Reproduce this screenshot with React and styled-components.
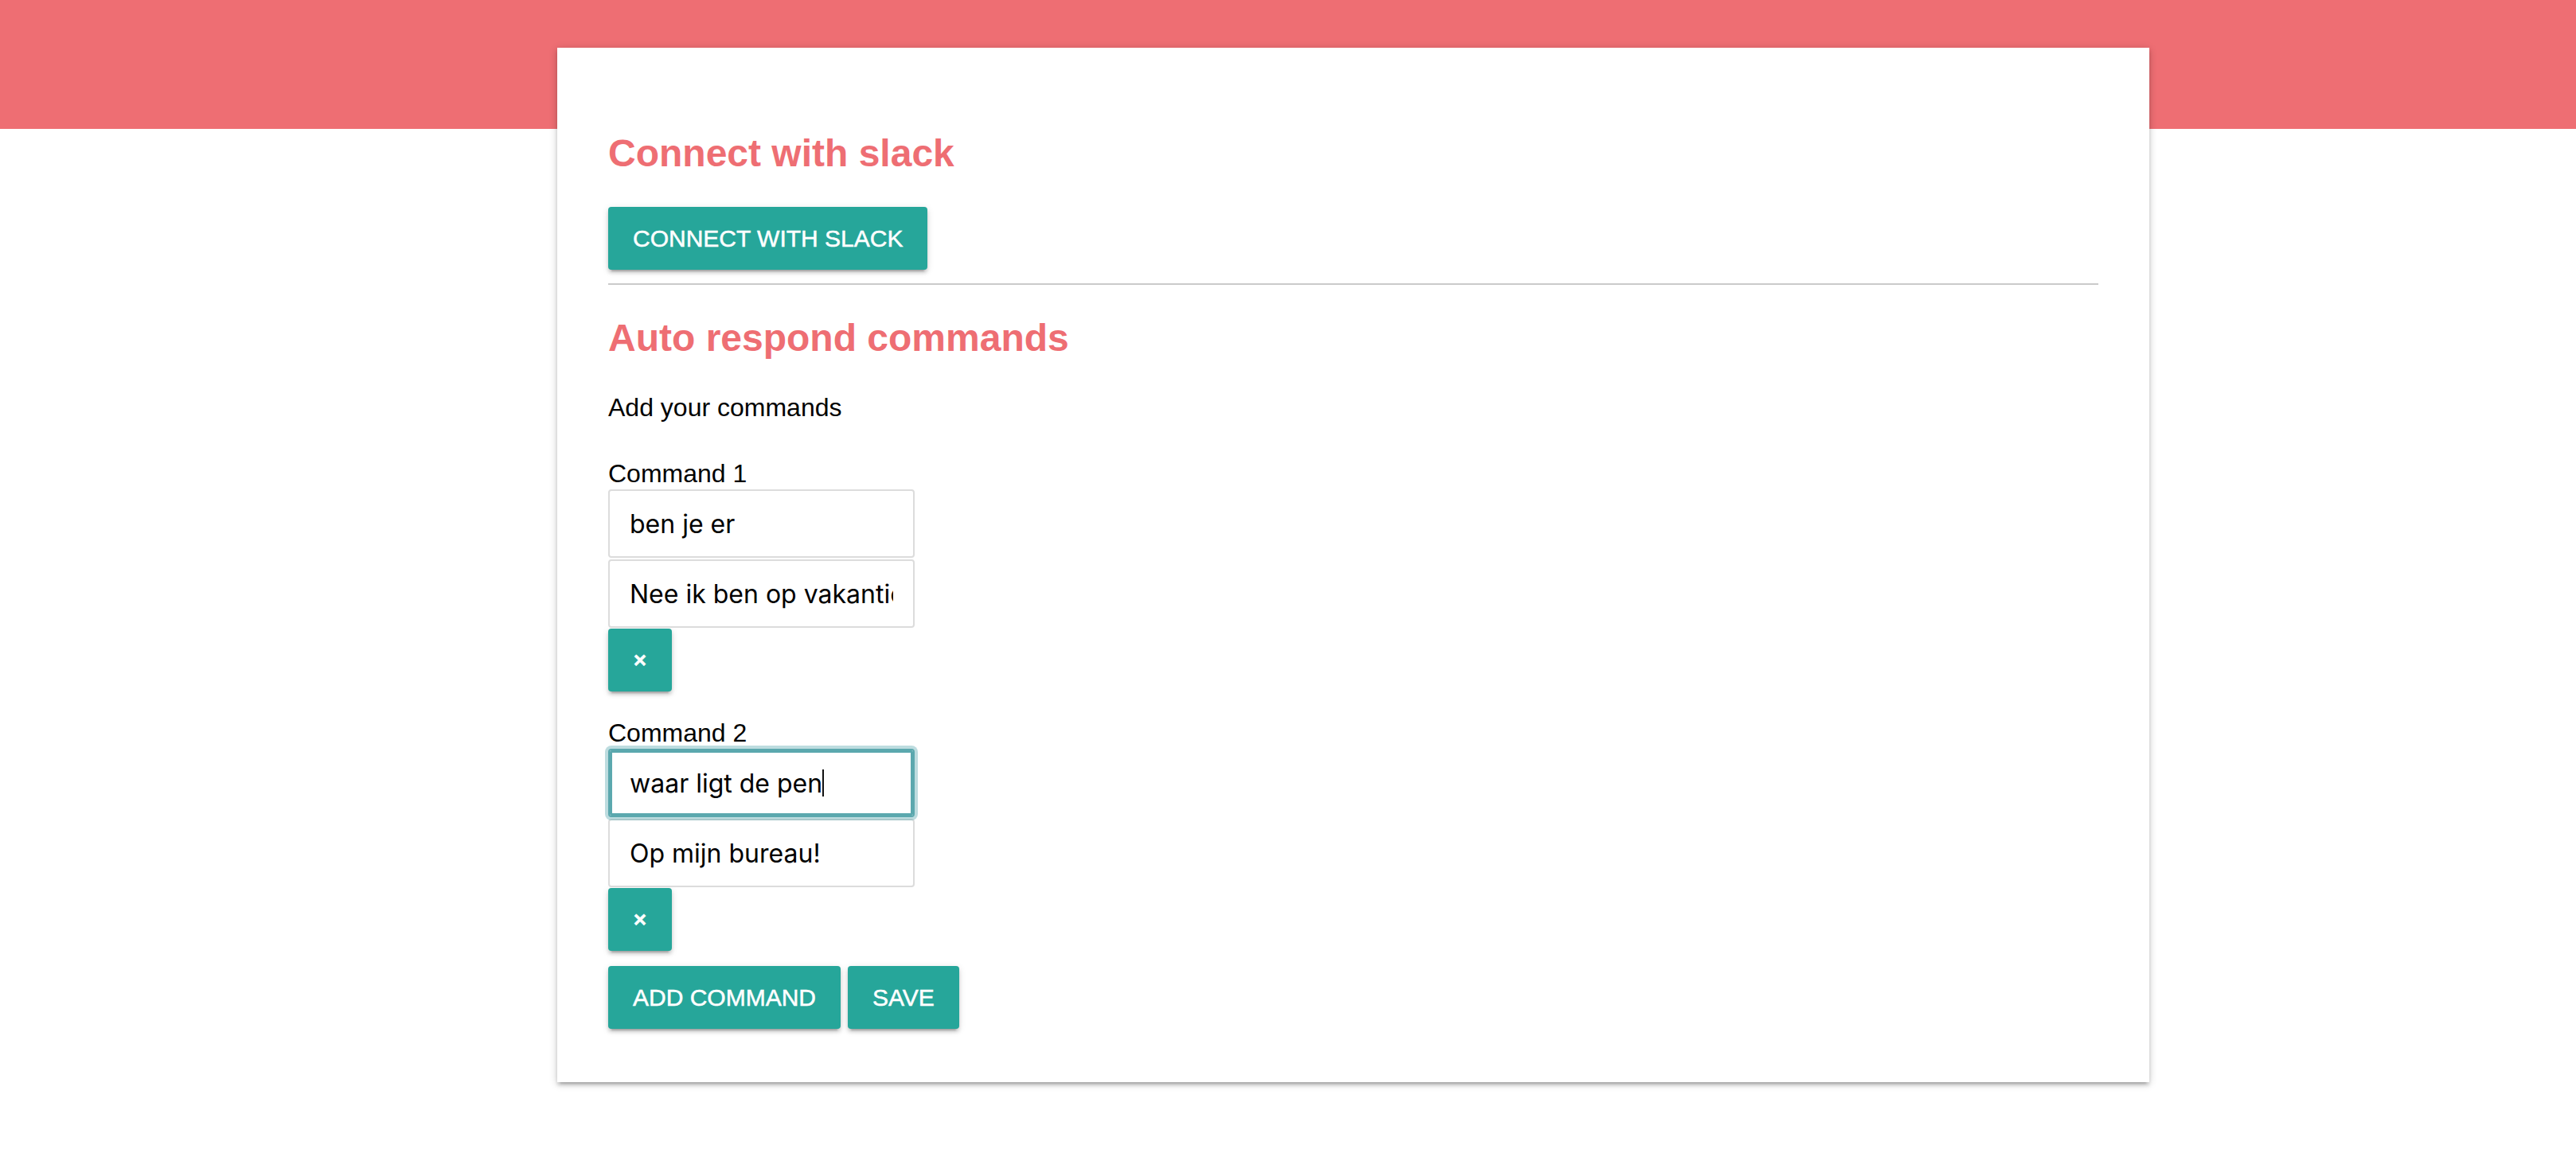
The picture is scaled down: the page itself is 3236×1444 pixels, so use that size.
import styled, { createGlobalStyle, css } from "styled-components";
import { useState } from "react";

const GlobalStyle = createGlobalStyle`
  body {
    margin: 0;
    background: #fff;
    color: #000;
    font-family: "Liberation Sans", Arial, Helvetica, sans-serif;
  }
`;

const Page = styled.div`
  min-height: 1444px;
  background: #fff;
`;

const Band = styled.header`
  height: 162px;
  background: #ee6e73;
`;

const Card = styled.main`
  box-sizing: border-box;
  width: 2000px;
  margin: -102px 0 0 700px;
  padding: 66px 64px 67px;
  background: #fff;
  display: flex;
  flex-direction: column;
  align-items: flex-start;
  box-shadow: 0 4px 4px 0 rgba(0, 0, 0, 0.14), 0 6px 2px -4px rgba(0, 0, 0, 0.12),
    0 2px 10px 0 rgba(0, 0, 0, 0.2);
`;

const Title = styled.h2`
  margin: 39px 0;
  font-size: 48px;
  line-height: 56px;
  font-weight: 700;
  color: #ee6e73;
`;

const Button = styled.button`
  box-sizing: border-box;
  height: 79px;
  min-width: ${(p) => (p.$square ? "80px" : "0")};
  padding: 0 31px;
  border: 0;
  border-radius: 4px;
  background: #26a69a;
  color: #fff;
  font-family: "Liberation Sans", Arial, sans-serif;
  font-size: ${(p) => (p.$square ? "28px" : "30px")};
  font-weight: ${(p) => (p.$square ? 700 : 400)};
  line-height: 79px;
  text-transform: uppercase;
  -webkit-text-stroke: 0.5px #fff;
  cursor: pointer;
  box-shadow: 0 4px 4px 0 rgba(0, 0, 0, 0.14), 0 2px 10px 0 rgba(0, 0, 0, 0.12),
    0 6px 2px -4px rgba(0, 0, 0, 0.2);
`;

const Divider = styled.hr`
  align-self: stretch;
  margin: 17px 0 0;
  border: 0;
  border-top: 2px solid #cacaca;
`;

const Intro = styled.p`
  margin: 0;
  font-size: 32px;
  line-height: 40px;
`;

const Group = styled.div`
  display: flex;
  flex-direction: column;
  align-items: flex-start;
  margin-top: ${(p) => (p.$first ? "43px" : "32px")};
`;

const Label = styled.label`
  font-size: 32px;
  line-height: 40px;
`;

const Fields = styled.div`
  display: flex;
  flex-direction: column;
  gap: 2px;
  margin-bottom: 1px;
`;

const FieldWrap = styled.div`
  position: relative;
  z-index: ${(p) => (p.$focused ? 1 : 0)};
`;

const TextInput = styled.input`
  display: block;
  box-sizing: border-box;
  width: 385px;
  height: 86px;
  margin: 0;
  padding: 0 25px;
  border: 2px solid #dcdcdc;
  border-radius: 4px;
  background: #fff;
  color: #000;
  font-family: Inter, "Noto Sans", sans-serif;
  font-size: 32px;
  outline: none;

  ${(p) =>
    p.$focused &&
    css`
      border-color: #5ba8ae;
      box-shadow: inset 0 0 0 3px #5ba8ae, 0 0 0 4px rgba(91, 168, 174, 0.4);
    `}
`;

const CaretLayer = styled.div`
  position: absolute;
  inset: 0;
  display: flex;
  align-items: center;
  padding: 0 27px;
  pointer-events: none;
  font-family: Inter, "Noto Sans", sans-serif;
  font-size: 32px;
  white-space: pre;
`;

const Ghost = styled.span`
  visibility: hidden;
`;

const Caret = styled.span`
  width: 2px;
  height: 34px;
  background: #111;
`;

const Actions = styled.div`
  display: flex;
  gap: 9px;
  margin-top: 19px;
`;

const Field = ({ value, focused, onChange }) => (
  <FieldWrap $focused={focused}>
    <TextInput value={value} $focused={focused} onChange={onChange} />
    {focused && (
      <CaretLayer>
        <Ghost>{value}</Ghost>
        <Caret />
      </CaretLayer>
    )}
  </FieldWrap>
);

const initialCommands = [
  { command: "ben je er", response: "Nee ik ben op vakantie" },
  { command: "waar ligt de pen", response: "Op mijn bureau!" }
];

const App = () => {
  const [commands, setCommands] = useState(initialCommands);

  const update = (index, key) => (event) => {
    const next = commands.slice();
    next[index] = { ...next[index], [key]: event.target.value };
    setCommands(next);
  };

  const remove = (index) => () => setCommands(commands.filter((_, i) => i !== index));

  const add = () => setCommands([...commands, { command: "", response: "" }]);

  return (
    <Page>
      <GlobalStyle />
      <Band />
      <Card>
        <Title>Connect with slack</Title>
        <Button>Connect with slack</Button>
        <Divider />
        <Title>Auto respond commands</Title>
        <Intro>Add your commands</Intro>

        {commands.map((item, index) => (
          <Group key={index} $first={index === 0}>
            <Label>Command {index + 1}</Label>
            <Fields>
              <Field
                value={item.command}
                focused={index === 1}
                onChange={update(index, "command")}
              />
              <Field value={item.response} onChange={update(index, "response")} />
            </Fields>
            <Button $square onClick={remove(index)}>
              ×
            </Button>
          </Group>
        ))}

        <Actions>
          <Button onClick={add}>Add command</Button>
          <Button>Save</Button>
        </Actions>
      </Card>
    </Page>
  );
};

export default App;
